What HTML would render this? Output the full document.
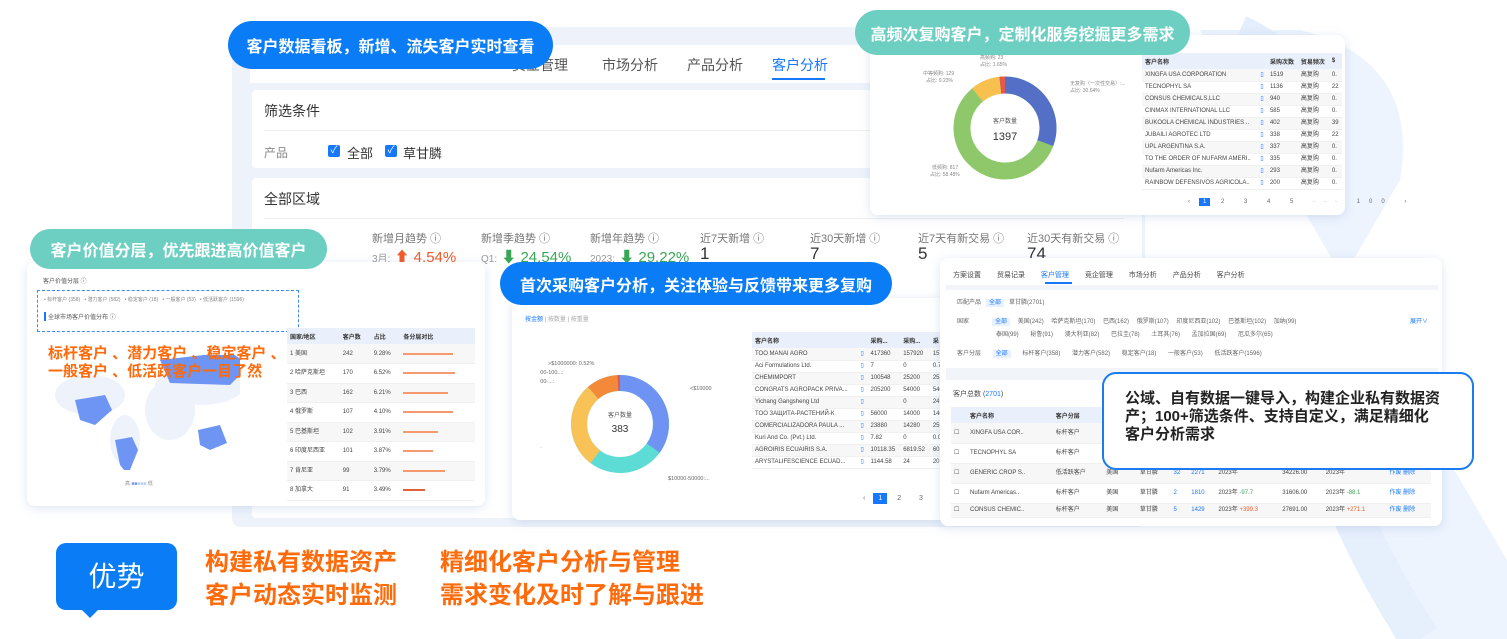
<!DOCTYPE html>
<html><head><meta charset="utf-8">
<style>
*{margin:0;padding:0;box-sizing:border-box}
body{width:1507px;height:639px;overflow:hidden;background:#fff;position:relative;font-family:"Liberation Sans","Noto Sans CJK SC",sans-serif;color:#333}
.a{position:absolute}
.card{position:absolute;background:#fff;border-radius:8px;box-shadow:0 2px 10px rgba(120,150,200,.25)}
.pill{position:absolute;color:#fff;font-weight:bold;font-size:16px;display:flex;align-items:center;justify-content:center;border-radius:24px;white-space:nowrap}
.blue{background:#0a7cf5}
.teal{background:#6ccfc2}
.t{position:absolute;white-space:nowrap}
.sm{font-size:6px;color:#555}
table{border-collapse:collapse}
.tb td{font-size:6px;color:#444;height:12px;line-height:6px;padding:0 3px;white-space:nowrap;overflow:hidden;border-bottom:1px solid #f0f0f0}
.tb tr:nth-child(even) td{background:#f7f7f7}
.tb th{font-size:6px;background:#eaf0fb;height:16px;text-align:left;padding:0 3px;font-weight:bold;white-space:nowrap}
.or{color:#ff6a0a;font-weight:bold}
</style></head><body>

<svg class="a" style="left:0;top:0" width="1507" height="639">
<path d="M1200 30 L1300 30 Q1420 60 1400 180 L1330 300 Q1290 380 1330 470 L1420 639 L1507 639 L1507 560 L1390 360 Z" fill="#edf4fe"/>
<path d="M1240 30 Q1330 70 1330 200" stroke="#e4eefc" stroke-width="30" fill="none"/>
<path d="M1330 300 Q1280 420 1420 639" stroke="#e6effc" stroke-width="40" fill="none"/>
</svg>

<div class="a" style="left:232px;top:27px;width:913px;height:500px;background:#eef3fb;border-radius:8px"></div>
<div class="a" style="left:250px;top:45px;width:880px;height:38px;background:#fff"></div>
<div class="t" style="left:512px;top:55px;font-size:14px;color:#555">资金管理</div>
<div class="t" style="left:602px;top:55px;font-size:14px;color:#555">市场分析</div>
<div class="t" style="left:687px;top:55px;font-size:14px;color:#555">产品分析</div>
<div class="t" style="left:772px;top:55px;font-size:14px;color:#1677ff">客户分析</div>
<div class="a" style="left:772px;top:78px;width:53px;height:2px;background:#1677ff"></div>
<div class="a" style="left:252px;top:90px;width:890px;height:78px;background:#fff;border-radius:4px"></div>
<div class="t" style="left:264px;top:101px;font-size:14px;color:#333">筛选条件</div>
<div class="a" style="left:264px;top:130px;width:860px;height:1px;background:#eee"></div>
<div class="t" style="left:264px;top:144px;font-size:12px;color:#888">产品</div>
<div class="a" style="left:328px;top:145px;width:12px;height:12px;background:#1677ff;border-radius:2px;color:#fff;font-size:10px;line-height:12px;text-align:center">✓</div>
<div class="t" style="left:347px;top:143px;font-size:13px">全部</div>
<div class="a" style="left:385px;top:145px;width:12px;height:12px;background:#1677ff;border-radius:2px;color:#fff;font-size:10px;line-height:12px;text-align:center">✓</div>
<div class="t" style="left:403px;top:143px;font-size:13px">草甘膦</div>
<div class="a" style="left:252px;top:178px;width:890px;height:340px;background:#fff;border-radius:4px"></div>
<div class="t" style="left:264px;top:189px;font-size:14px">全部区域</div>
<div class="a" style="left:264px;top:218px;width:860px;height:1px;background:#eee"></div>
<div class="t" style="left:372px;top:230px;font-size:11px;color:#777">新增月趋势 ⓘ</div>
<div class="t" style="left:481px;top:230px;font-size:11px;color:#777">新增季趋势 ⓘ</div>
<div class="t" style="left:590px;top:230px;font-size:11px;color:#777">新增年趋势 ⓘ</div>
<div class="t" style="left:700px;top:230px;font-size:11px;color:#777">近7天新增 ⓘ</div>
<div class="t" style="left:810px;top:230px;font-size:11px;color:#777">近30天新增 ⓘ</div>
<div class="t" style="left:918px;top:230px;font-size:11px;color:#777">近7天有新交易 ⓘ</div>
<div class="t" style="left:1027px;top:230px;font-size:11px;color:#777">近30天有新交易 ⓘ</div>
<div class="t" style="left:372px;top:246px;font-size:15px;color:#999"><span style="font-size:10px">3月:</span> <span style="color:#f05a28">⬆ 4.54%</span></div>
<div class="t" style="left:481px;top:246px;font-size:15px;color:#999"><span style="font-size:10px">Q1:</span> <span style="color:#3aa657">⬇ 24.54%</span></div>
<div class="t" style="left:590px;top:246px;font-size:15px;color:#999"><span style="font-size:10px">2023:</span> <span style="color:#3aa657">⬇ 29.22%</span></div>
<div class="t" style="left:700px;top:244px;font-size:17px">1</div>
<div class="t" style="left:810px;top:244px;font-size:17px">7</div>
<div class="t" style="left:918px;top:244px;font-size:17px">5</div>
<div class="t" style="left:1027px;top:244px;font-size:17px">74</div>

<div class="pill blue" style="left:228px;top:21px;width:325px;height:48px">客户数据看板，新增、流失客户实时查看</div>

<div class="card" style="left:870px;top:35px;width:475px;height:180px"></div>
<svg class="a" style="left:880px;top:45px" width="260" height="165">
<g transform="translate(125,83) rotate(-90)">
<circle r="43" fill="none" stroke="#8ec86b" stroke-width="17"/>
<circle r="43" fill="none" stroke="#5470c6" stroke-width="17" stroke-dasharray="82.8 300"/>
<circle r="43" fill="none" stroke="#f8c14f" stroke-width="17" stroke-dasharray="25 300" stroke-dashoffset="-240"/>
<circle r="43" fill="none" stroke="#e35a4c" stroke-width="17" stroke-dasharray="5 300" stroke-dashoffset="-265"/>
</g>
<text x="125" y="78" font-size="6" text-anchor="middle" fill="#555">客户数量</text>
<text x="125" y="95" font-size="11" text-anchor="middle" fill="#333">1397</text>
<text x="100" y="14" font-size="5" fill="#888">高频购: 23</text><text x="100" y="21" font-size="5" fill="#888">占比: 1.65%</text>
<text x="43" y="30" font-size="5" fill="#888">中等频购: 129</text><text x="46" y="37" font-size="5" fill="#888">占比: 9.23%</text>
<text x="190" y="40" font-size="5" fill="#888">无复购（一次性交易）:...</text><text x="190" y="47" font-size="5" fill="#888">占比: 30.64%</text>
<text x="52" y="124" font-size="5" fill="#888">低频购: 817</text><text x="50" y="131" font-size="5" fill="#888">占比: 58.48%</text>
</svg>
<table class="a tb" style="left:1142px;top:53px;width:200px">
<tr><th>客户名称</th><th></th><th>采购次数</th><th>贸易频次</th><th>$</th></tr>
<tr><td>XINGFA USA CORPORATION</td><td style="color:#1677ff">▯</td><td>1519</td><td>高复购</td><td>0.</td></tr>
<tr><td>TECNOPHYL SA</td><td style="color:#1677ff">▯</td><td>1136</td><td>高复购</td><td>22</td></tr>
<tr><td>CONSUS CHEMICALS,LLC</td><td style="color:#1677ff">▯</td><td>940</td><td>高复购</td><td>0.</td></tr>
<tr><td>CINMAX INTERNATIONAL LLC</td><td style="color:#1677ff">▯</td><td>585</td><td>高复购</td><td>0.</td></tr>
<tr><td>BUKOOLA CHEMICAL INDUSTRIES ..</td><td style="color:#1677ff">▯</td><td>402</td><td>高复购</td><td>39</td></tr>
<tr><td>JUBAILI AGROTEC LTD</td><td style="color:#1677ff">▯</td><td>338</td><td>高复购</td><td>22</td></tr>
<tr><td>UPL ARGENTINA S.A.</td><td style="color:#1677ff">▯</td><td>337</td><td>高复购</td><td>0.</td></tr>
<tr><td>TO THE ORDER OF NUFARM AMERI..</td><td style="color:#1677ff">▯</td><td>335</td><td>高复购</td><td>0.</td></tr>
<tr><td>Nufarm Americas Inc.</td><td style="color:#1677ff">▯</td><td>293</td><td>高复购</td><td>0.</td></tr>
<tr><td>RAINBOW DEFENSIVOS AGRICOLA..</td><td style="color:#1677ff">▯</td><td>200</td><td>高复购</td><td>0.</td></tr>
</table>
<div class="t" style="left:1188px;top:199px;font-size:6px;color:#666;letter-spacing:9px">‹<span style="background:#1677ff;color:#fff;padding:1px 4px;letter-spacing:0">1</span> 2 3 4 5 ··· 100 ›</div>

<div class="pill teal" style="left:855px;top:10px;width:335px;height:45px">高频次复购客户，定制化服务挖掘更多需求</div>

<div class="card" style="left:27px;top:262px;width:458px;height:244px"></div>
<div class="t sm" style="left:43px;top:276px">客户价值分层 ⓘ</div>
<div class="a" style="left:37px;top:290px;width:262px;height:42px;border:1px dashed #3a8cf0"></div>
<div class="t" style="left:44px;top:296px;font-size:5px;color:#888">• 标杆客户 (358) &nbsp; • 潜力客户 (582) &nbsp; • 稳定客户 (18) &nbsp; • 一般客户 (53) &nbsp; • 低活跃客户 (1596)</div>
<div class="t sm" style="left:44px;top:312px;border-left:2px solid #1677ff;padding-left:2px">全球市场客户价值分布 ⓘ</div>
<svg class="a" style="left:50px;top:355px" width="190" height="115">
<g fill="#eef2fb"><ellipse cx="40" cy="40" rx="35" ry="20"/><ellipse cx="75" cy="85" rx="15" ry="25"/><ellipse cx="120" cy="55" rx="25" ry="30"/><ellipse cx="150" cy="30" rx="45" ry="20"/></g>
<g fill="#6e95f3"><path d="M25 45 L55 40 L62 55 L45 70 L30 65 Z"/><path d="M65 85 L82 82 L88 95 L78 120 L70 110 Z"/><path d="M110 5 L180 -3 L200 10 L180 30 L120 28 Z"/><path d="M148 75 L170 70 L177 88 L160 95 L150 90 Z"/></g>
</svg>
<div class="t" style="left:125px;top:480px;font-size:5px;color:#888">高 <span style="color:#6e95f3">■■</span><span style="color:#b7cbf7">■■■</span> 低</div>
<div class="t or" style="left:48px;top:345px;font-size:15px;line-height:18px">标杆客户 、潜力客户 、稳定客户 、<br>一般客户 、低活跃客户一目了然</div>
<table class="a tb" style="left:287px;top:328px;width:188px">
<tr><th>国家/地区</th><th>客户数</th><th>占比</th><th>各分层对比</th></tr>
<tr><td style="height:19.5px">1 美国</td><td>242</td><td>9.28%</td><td><div style="width:50px;height:2px;background:#f59a6e"></div></td></tr>
<tr><td style="height:19.5px">2 哈萨克斯坦</td><td>170</td><td>6.52%</td><td><div style="width:52px;height:2px;background:#f59a6e"></div></td></tr>
<tr><td style="height:19.5px">3 巴西</td><td>162</td><td>6.21%</td><td><div style="width:45px;height:2px;background:#f59a6e"></div></td></tr>
<tr><td style="height:19.5px">4 俄罗斯</td><td>107</td><td>4.10%</td><td><div style="width:50px;height:2px;background:#f59a6e"></div></td></tr>
<tr><td style="height:19.5px">5 巴基斯坦</td><td>102</td><td>3.91%</td><td><div style="width:35px;height:2px;background:#f59a6e"></div></td></tr>
<tr><td style="height:19.5px">6 印度尼西亚</td><td>101</td><td>3.87%</td><td><div style="width:30px;height:2px;background:#f59a6e"></div></td></tr>
<tr><td style="height:19.5px">7 肯尼亚</td><td>99</td><td>3.79%</td><td><div style="width:42px;height:2px;background:#f59a6e"></div></td></tr>
<tr><td style="height:19.5px">8 加拿大</td><td>91</td><td>3.49%</td><td><div style="width:22px;height:2px;background:#e0603a"></div></td></tr>
</table>

<div class="pill teal" style="left:30px;top:229px;width:297px;height:40px">客户价值分层，优先跟进高价值客户</div>

<div class="card" style="left:512px;top:298px;width:440px;height:222px"></div>
<div class="t" style="left:525px;top:314px;font-size:6px;color:#1677ff">按金额 <span style="color:#aaa">| 按数量 | 按重量</span></div>
<svg class="a" style="left:540px;top:345px" width="210" height="150">
<g transform="translate(80,79) rotate(-90)">
<circle r="41" fill="none" stroke="#5cdcd4" stroke-width="16"/>
<circle r="41" fill="none" stroke="#6f93f2" stroke-width="16" stroke-dasharray="90 300"/>
<circle r="41" fill="none" stroke="#f8c257" stroke-width="16" stroke-dasharray="73 300" stroke-dashoffset="-155"/>
<circle r="41" fill="none" stroke="#f5893a" stroke-width="16" stroke-dasharray="27 300" stroke-dashoffset="-228"/>
<circle r="41" fill="none" stroke="#e35a4c" stroke-width="16" stroke-dasharray="3 300" stroke-dashoffset="-255"/>
</g>
<text x="80" y="72" font-size="6" text-anchor="middle" fill="#555">客户数量</text>
<text x="80" y="87" font-size="10" text-anchor="middle" fill="#333">383</text>
<text x="8" y="20" font-size="5.5" fill="#666">&gt;$1000000: 0.52%</text>
<text x="-15" y="29" font-size="5.5" fill="#666">$500000-100...:</text>
<text x="-15" y="38" font-size="5.5" fill="#666">$100000-...:</text>
<text x="150" y="45" font-size="5.5" fill="#666">&lt;$10000</text>
<text x="-15" y="103" font-size="5.5" fill="#666">$500...</text>
<text x="128" y="135" font-size="5.5" fill="#666">$10000-50000:...</text>
</svg>
<table class="a tb" style="left:752px;top:332px;width:195px">
<tr><th>客户名称</th><th></th><th>采购...</th><th>采购...</th><th>采</th></tr>
<tr><td>TOO MANAI AGRO</td><td style="color:#1677ff">▯</td><td>417360</td><td>157920</td><td>157</td></tr>
<tr><td>Aci Formulations Ltd.</td><td style="color:#1677ff">▯</td><td>7</td><td>0</td><td>0.7</td></tr>
<tr><td>CHEMIMPORT</td><td style="color:#1677ff">▯</td><td>100548</td><td>25200</td><td>253</td></tr>
<tr><td>CONGRATS AGROPACK PRIVA...</td><td style="color:#1677ff">▯</td><td>205200</td><td>54000</td><td>540</td></tr>
<tr><td>Yichang Gangsheng Ltd</td><td style="color:#1677ff">▯</td><td></td><td>0</td><td>247</td></tr>
<tr><td>TOO ЗАЩИТА-РАСТЕНИЙ-К</td><td style="color:#1677ff">▯</td><td>56000</td><td>14000</td><td>140</td></tr>
<tr><td>COMERCIALIZADORA PAULA ...</td><td style="color:#1677ff">▯</td><td>23880</td><td>14280</td><td>259</td></tr>
<tr><td>Kuri And Co. (Pvt.) Ltd.</td><td style="color:#1677ff">▯</td><td>7.82</td><td>0</td><td>0.0</td></tr>
<tr><td>AGROIRIS ECUAIRIS S.A.</td><td style="color:#1677ff">▯</td><td>10118.35</td><td>6819.52</td><td>605</td></tr>
<tr><td>ARYSTALIFESCIENCE ECUAD...</td><td style="color:#1677ff">▯</td><td>1144.58</td><td>24</td><td>20</td></tr>
</table>
<div class="t" style="left:863px;top:495px;font-size:7px;color:#666;letter-spacing:8px">‹<span style="background:#1677ff;color:#fff;padding:2px 5px;letter-spacing:0">1</span> 2 3</div>

<div class="pill blue" style="left:500px;top:262px;width:392px;height:43px">首次采购客户分析，关注体验与反馈带来更多复购</div>

<div class="card" style="left:940px;top:258px;width:502px;height:268px"></div>
<div class="t" style="left:953px;top:270px;font-size:7px;color:#444;word-spacing:14px">方案设置 贸易记录 <span style="color:#1677ff">客户管理</span> 竞企管理 市场分析 产品分析 客户分析</div>
<div class="a" style="left:1045px;top:282px;width:27px;height:2px;background:#1677ff"></div>
<div class="a" style="left:946px;top:285px;width:492px;height:5px;background:#f1f4f9"></div>
<div class="t" style="left:957px;top:297px;font-size:6px;color:#666">匹配产品 &nbsp; <span style="color:#1677ff;background:#e8f1ff;padding:1px 3px">全部</span> &nbsp; 草甘膦(2701)</div>
<div class="t" style="left:957px;top:316px;font-size:6px;color:#666;word-spacing:6px">国家 &nbsp; <span style="color:#1677ff;background:#e8f1ff;padding:1px 3px">全部</span> 美国(242) 哈萨克斯坦(170) 巴西(162) 俄罗斯(107) 印度尼西亚(102) 巴基斯坦(102) 加纳(99)</div>
<div class="t" style="left:1410px;top:316px;font-size:6px;color:#1677ff">展开∨</div>
<div class="t" style="left:996px;top:329px;font-size:6px;color:#666;word-spacing:10px">泰国(99) 秘鲁(91) 澳大利亚(82) 巴拉圭(78) 土耳其(76) 孟加拉国(69) 厄瓜多尔(65)</div>
<div class="t" style="left:957px;top:348px;font-size:6px;color:#666;word-spacing:10px">客户分层 <span style="color:#1677ff;background:#e8f1ff;padding:1px 3px">全部</span> 标杆客户(358) 潜力客户(582) 稳定客户(18) 一般客户(53) 低活跃客户(1596)</div>
<div class="a" style="left:946px;top:368px;width:492px;height:12px;background:#f1f4f9"></div>
<div class="t" style="left:953px;top:389px;font-size:7px;color:#444">客户总数 (<span style="color:#1677ff">2701</span>)</div>
<table class="a tb" style="left:951px;top:407px;width:480px">
<tr><th style="width:16px"></th><th>客户名称</th><th>客户分层</th><th>国家</th><th>产品</th><th></th><th></th><th></th><th></th><th></th><th></th></tr>
<tr><td style="height:20px">☐</td><td>XINGFA USA COR..</td><td>标杆客户</td><td>美国</td><td></td><td></td><td></td><td></td><td></td><td></td><td></td></tr>
<tr><td style="height:20px">☐</td><td>TECNOPHYL SA</td><td>标杆客户</td><td>阿根廷</td><td></td><td></td><td></td><td></td><td></td><td></td><td></td></tr>
<tr><td style="height:20px">☐</td><td>GENERIC CROP S..</td><td>低活跃客户</td><td>美国</td><td>草甘膦</td><td style="color:#1677ff">32</td><td style="color:#1677ff">2271</td><td>2023年</td><td>34226.00</td><td>2023年</td><td style="color:#1677ff">作废 删除</td></tr>
<tr><td style="height:20px">☐</td><td>Nufarm Americas..</td><td>标杆客户</td><td>美国</td><td>草甘膦</td><td style="color:#1677ff">2</td><td style="color:#1677ff">1810</td><td>2023年 <span style="color:#3aa657">-97.7</span></td><td>31606.00</td><td>2023年 <span style="color:#3aa657">-88.1</span></td><td style="color:#1677ff">作废 删除</td></tr>
<tr><td style="height:14px">☐</td><td>CONSUS CHEMIC..</td><td>标杆客户</td><td>美国</td><td>草甘膦</td><td style="color:#1677ff">5</td><td style="color:#1677ff">1429</td><td>2023年 <span style="color:#f05a28">+399.3</span></td><td>27691.00</td><td>2023年 <span style="color:#f05a28">+271.1</span></td><td style="color:#1677ff">作废 删除</td></tr>
</table>

<div class="a" style="left:1102px;top:372px;width:372px;height:98px;background:#fff;border:2px solid #1a7cf0;border-radius:14px"></div>
<div class="t" style="left:1125px;top:390px;font-size:15px;font-weight:bold;color:#222;line-height:18px">公域、自有数据一键导入，构建企业私有数据资<br>产；100+筛选条件、支持自定义，满足精细化<br>客户分析需求</div>

<div class="a" style="left:56px;top:543px;width:121px;height:67px;background:#0a7cf5;border-radius:10px"></div>
<div class="a" style="left:80px;top:608px;width:0;height:0;border-left:10px solid transparent;border-right:10px solid transparent;border-top:10px solid #0a7cf5"></div>
<div class="t" style="left:56px;top:555px;width:121px;text-align:center;color:#fff;font-size:28px">优势</div>
<div class="t or" style="left:205px;top:548px;font-size:24px;line-height:30px">构建私有数据资产</div>
<div class="t or" style="left:440px;top:548px;font-size:24px;line-height:30px">精细化客户分析与管理</div>
<div class="t or" style="left:205px;top:581px;font-size:24px;line-height:30px">客户动态实时监测</div>
<div class="t or" style="left:440px;top:581px;font-size:24px;line-height:30px">需求变化及时了解与跟进</div>
</body></html>
